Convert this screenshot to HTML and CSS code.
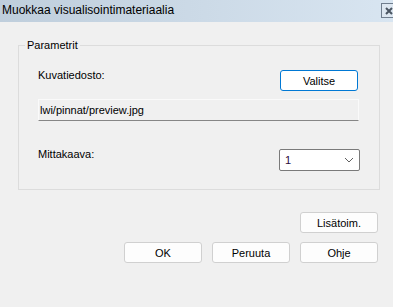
FILE: index.html
```html
<!DOCTYPE html>
<html lang="fi">
<head>
    <meta charset="UTF-8">
    <title>Muokkaa visualisointimateriaalia</title>
    <link rel="stylesheet" href="styles.css">
</head>
<body>
    <div class="title-bar">
        <span class="title">Muokkaa visualisointimateriaalia</span>
        <span class="close-btn">
            <svg width="12" height="12" viewBox="0 0 12 12">
                <path d="M3 3 L9 9 M9 3 L3 9" stroke="#4a5562" stroke-width="2"/>
            </svg>
        </span>
    </div>
    <div class="dialog">
        <fieldset class="group">
            <legend>Parametrit</legend>
            <div class="row">
                <span class="label">Kuvatiedosto:</span>
                <button class="btn btn-default">Valitse</button>
            </div>
            <div class="path-field">lwi/pinnat/preview.jpg</div>
            <div class="row scale-row">
                <span class="label">Mittakaava:</span>
                <div class="combo">
                    <span>1</span>
                    <svg width="10" height="6" viewBox="0 0 10 6">
                        <path d="M1 1 L5 5 L9 1" fill="none" stroke="#606060" stroke-width="1"/>
                    </svg>
                </div>
            </div>
        </fieldset>
        <div class="extra-row">
            <button class="btn">Lisätoim.</button>
        </div>
        <div class="button-row">
            <button class="btn">OK</button>
            <button class="btn">Peruuta</button>
            <button class="btn">Ohje</button>
        </div>
    </div>
</body>
</html>
```

FILE: styles.css
```css
body {
    margin: 0;
    font-family: "Liberation Sans", Arial, sans-serif;
    font-size: 11px;
    line-height: 13px;
    color: #000;
    background-color: #f0f0f0;
}
.title-bar {
    height: 22px;
    display: flex;
    align-items: flex-start;
    justify-content: space-between;
    overflow: hidden;
    background: linear-gradient(to right, #bfcedc, #d8e5f1);
}
.title {
    font-size: 12px;
    margin: 4px 0 0 2px;
}
.close-btn {
    width: 13px;
    height: 13px;
    margin: 3px -3px 0 0;
    border: 1px solid #6f7d8d;
    background-color: #dde7f1;
    display: flex;
    align-items: center;
    justify-content: center;
}
.dialog {
    padding: 0 15px 0 18px;
}
.group {
    margin: 17px -2px 0 0;
    padding: 0 20px 18px 19px;
    border: 1px solid #dcdcdc;
}
.group legend {
    margin-left: -13px;
    padding: 0 2px;
}
.row {
    display: flex;
    justify-content: space-between;
    align-items: flex-start;
    margin-top: 18px;
}
.label {
    margin-top: -1px;
}
.btn {
    width: 78px;
    height: 21px;
    padding: 0;
    font-family: "Liberation Sans", Arial, sans-serif;
    font-size: 11px;
    color: #000;
    background-color: #fdfdfd;
    border: 1px solid #d0d0d0;
    border-radius: 3px;
}
.btn-default {
    margin-right: 1px;
    border-color: #0078d4;
    background-color: #fff;
    box-shadow: inset 0 0 0 1px #fff;
}
.path-field {
    margin-top: 8px;
    height: 20px;
    padding-left: 1px;
    line-height: 20px;
    background-color: #f0f0f0;
    border: 1px solid #fafafa;
    border-bottom-color: #868686;
}
.scale-row {
    margin-top: 28px;
}
.combo {
    width: 81px;
    height: 22px;
    margin-right: -1px;
    padding: 0 5px;
    box-sizing: border-box;
    display: flex;
    align-items: center;
    justify-content: space-between;
    background-color: #fff;
    border: 1px solid #7a7a7a;
    border-radius: 2px;
    color: #2a0a3a;
}
.extra-row {
    display: flex;
    justify-content: flex-end;
    margin-top: 22px;
}
.button-row {
    display: flex;
    justify-content: flex-end;
    gap: 10px;
    margin-top: 9px;
}
```
